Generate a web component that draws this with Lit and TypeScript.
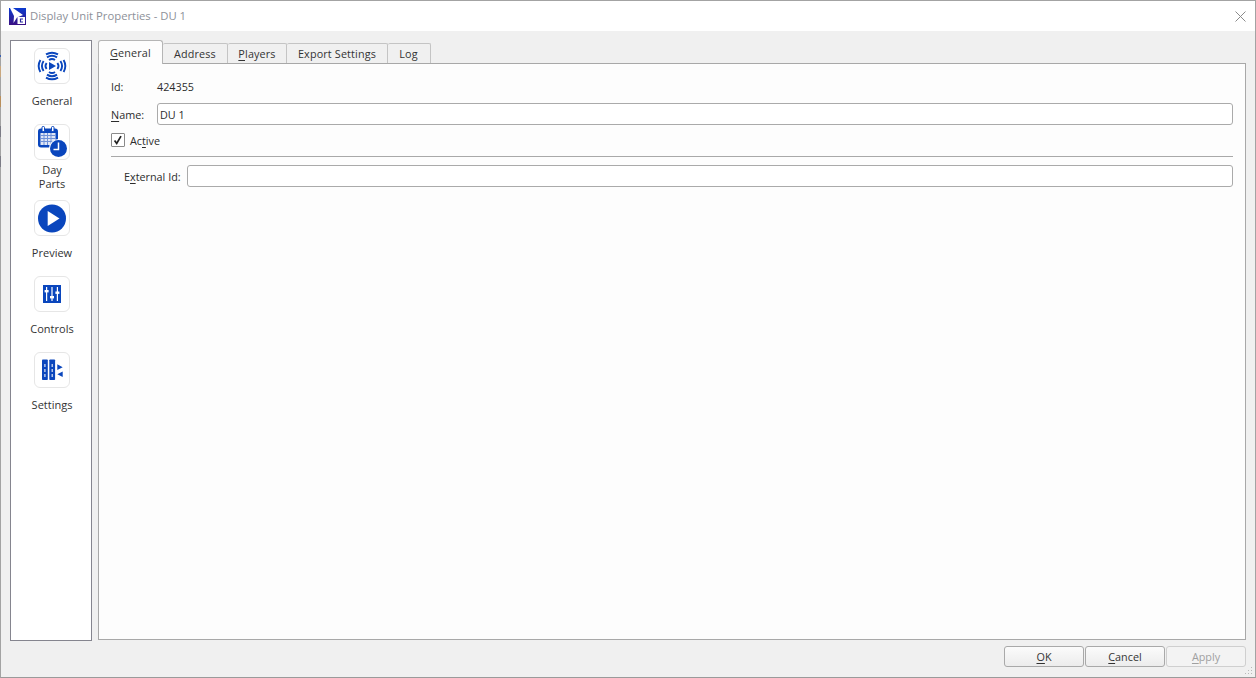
import { LitElement, html, css, svg } from "lit";
import { customElement } from "lit/decorators.js";

const B = "#0a46bd";
const icons: Record<string, unknown> = {
  general: svg`<svg width="36" height="36" viewBox="0 0 36 36" fill="none" stroke="${B}" stroke-width="1.9" stroke-linecap="butt">
    <path d="M15 14 L15 22 L22 18 Z" fill="${B}" stroke="none"/>
    <path d="M12.6 15a5 5 0 0 0 0 6M23.4 15a5 5 0 0 1 0 6"/>
    <path d="M9.6 13a9 9 0 0 0 0 10M26.4 13a9 9 0 0 1 0 10"/>
    <path d="M6.4 12a12 12 0 0 0 0 12M29.6 12a12 12 0 0 1 0 12"/>
    <path d="M15 12.1a5 5 0 0 1 6 0M15 23.9a5 5 0 0 0 6 0"/>
    <path d="M13 9.4a9 9 0 0 1 10 0M13 26.6a9 9 0 0 0 10 0"/>
    <path d="M12 6.4a12 12 0 0 1 12 0M12 29.6a12 12 0 0 0 12 0"/>
  </svg>`,
  day: svg`<svg width="36" height="36" viewBox="0 0 36 36">
    <rect x="4" y="4.5" width="20" height="19" rx="3" fill="${B}"/>
    <rect x="6.5" y="9" width="15" height="12" fill="#dfe6f5"/>
    <path d="M6.5 11.5h15M6.5 14.5h15M6.5 17.5h15M10 9v12M13.5 9v12M17 9v12" stroke="#6f91d8" stroke-width="1"/>
    <rect x="8" y="2.5" width="2.5" height="5" rx="1" fill="#fff" stroke="${B}" stroke-width="1"/>
    <rect x="17.5" y="2.5" width="2.5" height="5" rx="1" fill="#fff" stroke="${B}" stroke-width="1"/>
    <circle cx="24.5" cy="24.5" r="9.5" fill="#fff"/>
    <circle cx="24.5" cy="24.5" r="8.5" fill="${B}"/>
    <path d="M24.5 18.5V25.5H19.5" fill="none" stroke="#fff" stroke-width="1.5"/>
  </svg>`,
  play: svg`<svg width="36" height="36" viewBox="0 0 36 36">
    <circle cx="18" cy="18.5" r="14" fill="${B}"/>
    <path d="M13.7 11V26L25.5 18.5Z" fill="#fff"/>
  </svg>`,
  controls: svg`<svg width="36" height="36" viewBox="0 0 36 36">
    <rect x="9" y="9" width="18" height="18" fill="${B}"/>
    <g stroke="#fff" stroke-width="1.2">
      <path d="M12.6 11V25M18 11V25M23.4 11V25"/>
    </g>
    <g fill="#fff">
      <rect x="10.6" y="14" width="4" height="2.4"/>
      <rect x="16" y="20" width="4" height="2.4"/>
      <rect x="21.4" y="15.5" width="4" height="2.4"/>
    </g>
  </svg>`,
  settings: svg`<svg width="36" height="36" viewBox="0 0 36 36">
    <rect x="8" y="7.5" width="5.8" height="20.5" rx=".8" fill="${B}"/>
    <rect x="15.3" y="7.5" width="5.8" height="20.5" rx=".8" fill="${B}"/>
    <g fill="#dfe6f5">
      <rect x="10.3" y="12" width="1.2" height="3"/><rect x="10.3" y="17" width="1.2" height="3"/><rect x="10.3" y="22" width="1.2" height="3"/>
      <rect x="17.6" y="12" width="1.2" height="3"/><rect x="17.6" y="17" width="1.2" height="3"/><rect x="17.6" y="22" width="1.2" height="3"/>
    </g>
    <path d="M23.3 12.3V18L28.7 15.2Z M28.7 19.5V25L23.3 22.2Z" fill="${B}"/>
  </svg>`,
};

@customElement("app-root")
export class AppRoot extends LitElement {
  static styles = css`
    :host { display: block; width: 1256px; height: 678px; overflow: hidden; }
    * { box-sizing: border-box; }
    .win {
      position: relative; width: 1256px; height: 678px; background: #f0f0f0;
      border: 1px solid #a3a3a3; border-bottom-color: #9a9a9a;
      font-family: "Open Sans", "Noto Sans", sans-serif; font-size: 10.8px; color: #2c2c2c;
      display: flex; flex-direction: column;
    }
    .edge {
      position: absolute; left: -1px; top: 0; width: 1px; height: 170px;
      background: linear-gradient(#a3a3a3 0 54px, #3a5fb0 54px 56px, #a3a3a3 56px 65px, #c9a77e 65px 76px, #a3a3a3 76px 95px,
        #b98f5c 95px 106px, #a3a3a3 106px 125px, #7b7b85 125px 136px, #a3a3a3 136px 155px, #7b7b85 155px 166px, #a3a3a3 166px);
    }
    .title { height: 30px; background: #fff; display: flex; align-items: center; padding-left: 8px; flex: none; }
    .title span { margin: 0 0 2px 4px; font-size: 11.3px; color: #8d9199; }
    .logo { display: block; }
    .close { margin-left: auto; margin-right: 9px; display: block; }
    .main { flex: 1; display: flex; padding: 9px 9px 0 9px; gap: 6px; min-height: 0; }
    .side {
      width: 82px; height: 601px; background: #fff; border: 1px solid #85858f;
      padding: 7px 0 0 2px; display: flex; flex-direction: column; align-items: center; flex: none;
    }
    .item { width: 78px; display: flex; flex-direction: column; align-items: center; height: 76px; flex: none; }
    .ibox { width: 36px; height: 36px; border: 1px solid #e6e6e6; border-radius: 6px; display: flex; align-items: center; justify-content: center; background: #fff; flex: none; }
    .ibox svg { display: block; margin: -1px; flex: none; }
    .lbl { height: 34px; display: flex; align-items: center; justify-content: center; text-align: center; line-height: 14px; font-size: 11px; width: 60px; color: #333; }
    .right { flex: 1; display: flex; flex-direction: column; min-width: 0; height: 600px; }
    .tabs { display: flex; height: 23px; align-items: flex-end; flex: none; position: relative; z-index: 1; }
    .tab {
      height: 20px; background: #f0f0f0; border: 1px solid #c4c4c4; border-bottom: none; border-left: none;
      border-radius: 2px 2px 0 0; display: flex; align-items: center; justify-content: center; font-size: 10.8px; color: #333;
      letter-spacing: 0.15px;
    }
    .tab.on {
      height: 24px; margin-bottom: -1px; background: #fdfdfd; border: 1px solid #b5b5b5; border-bottom: none;
      border-radius: 3px 3px 0 0; width: 65px; padding: 0 0 1px 0;
    }
    .w1 { width: 65px; } .w2 { width: 59px; } .w3 { width: 101px; } .w4 { width: 43px; padding-right: 1px; }
    .panel {
      flex: 1; background: #fdfdfd; border: 1px solid #a8a8a8; padding: 11px 12px 0 12px; display: flex; flex-direction: column;
    }
    .row { display: flex; align-items: center; }
    .r-id { height: 22px; }
    .r-id .k { width: 46px; }
    .r-name { height: 22px; margin-top: 6px; }
    .r-name .k { width: 46px; }
    .inp { flex: 1; height: 22px; border: 1px solid #aaa; border-radius: 3px; background: #fff; padding: 0 2px; display: flex; align-items: center; }
    .r-act { margin-top: 8px; height: 14px; }
    .cb { width: 14px; height: 14px; border: 1px solid #8a8a8a; background: #fff; display: block; margin-right: 5px; border-radius: 1px; }
    .hr { height: 1px; background: #a9a9a9; margin-top: 9px; flex: none; }
    .r-ext { margin-top: 8px; height: 22px; }
    .r-ext .k { width: 76px; padding-left: 13px; white-space: nowrap; }
    .foot { display: flex; justify-content: flex-end; gap: 1px; padding: 7px 9px 0 0; height: 38px; flex: none; }
    .btn {
      width: 80px; height: 21px; border: 1px solid #a9a9a9; border-radius: 3px;
      background: linear-gradient(#fbfbfb, #ececec); display: flex; align-items: center; justify-content: center; color: #333;
    }
    .btn.dis { color: #a0a0a0; border-color: #cfcfcf; background: #f3f3f3; }
    .grip { position: absolute; right: 1px; bottom: 1px; display: block; }
    u { text-underline-offset: 2px; text-decoration-thickness: 1px; }
  `;

  item(id: string, label: unknown) {
    return html`<div class="item"><div class="ibox">${icons[id]}</div><div class="lbl">${label}</div></div>`;
  }

  render() {
    return html`<div class="win">
      <div class="edge"></div>
      <div class="title">
        <svg class="logo" width="17" height="17" viewBox="0 0 17 17">
          <defs><linearGradient id="lg" x1="0" y1="0" x2="0" y2="1"><stop offset="0" stop-color="#0b3bd0"/><stop offset="1" stop-color="#3a0f82"/></linearGradient></defs>
          <rect width="17" height="17" fill="url(#lg)"/>
          <path d="M1 0H4L14 7L8 9.5L4.5 15L5 8Z" fill="#fff"/>
          <rect x="8.5" y="9" width="7.5" height="7" fill="#fff"/>
          <path d="M14 11H11.5V14H14" fill="none" stroke="#2a2aa0" stroke-width="1.2"/>
        </svg>
        <span>Display Unit Properties - DU 1</span>
        <svg class="close" width="11" height="11" viewBox="0 0 11 11"><path d="M.5 .5L10.5 10.5M10.5 .5L.5 10.5" stroke="#8a8a8a" stroke-width="1"/></svg>
      </div>
      <div class="main">
        <div class="side">
          ${this.item("general", "General")}
          ${this.item("day", html`Day<br />Parts`)}
          ${this.item("play", "Preview")}
          ${this.item("controls", "Controls")}
          ${this.item("settings", "Settings")}
        </div>
        <div class="right">
          <div class="tabs">
            <div class="tab on"><span><u>G</u>eneral</span></div>
            <div class="tab w1">Address</div>
            <div class="tab w2"><span><u>P</u>layers</span></div>
            <div class="tab w3">Export Settings</div>
            <div class="tab w4">Log</div>
          </div>
          <div class="panel">
            <div class="row r-id"><div class="k">Id:</div><div>424355</div></div>
            <div class="row r-name"><div class="k"><u>N</u>ame:</div><div class="inp">DU 1</div></div>
            <div class="row r-act">
              <svg class="cb" viewBox="0 0 14 14"><path d="M3 7.5L5.5 11L10.5 2.5" fill="none" stroke="#222" stroke-width="2"/></svg>
              <div>Ac<u>t</u>ive</div>
            </div>
            <div class="hr"></div>
            <div class="row r-ext"><div class="k">E<u>x</u>ternal Id:</div><div class="inp"></div></div>
          </div>
        </div>
      </div>
      <div class="foot">
        <div class="btn"><span><u>O</u>K</span></div>
        <div class="btn"><span><u>C</u>ancel</span></div>
        <div class="btn dis"><span><u>A</u>pply</span></div>
      </div>
      <svg class="grip" width="10" height="10" viewBox="0 0 10 10" fill="#b8b8b8">
        <rect x="7" y="1" width="1" height="1"/><rect x="4" y="4" width="1" height="1"/><rect x="7" y="4" width="1" height="1"/>
        <rect x="1" y="7" width="1" height="1"/><rect x="4" y="7" width="1" height="1"/><rect x="7" y="7" width="1" height="1"/>
      </svg>
    </div>`;
  }
}
